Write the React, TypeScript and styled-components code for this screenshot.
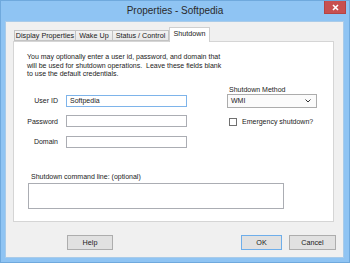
import React from 'react'
import styled, { createGlobalStyle } from 'styled-components'

const GlobalStyle = createGlobalStyle`
  html, body {
    margin: 0;
    padding: 0;
    width: 350px;
    height: 263px;
    overflow: hidden;
    background: #8fc4f3;
  }
  * {
    box-sizing: border-box;
  }
`

const ui = {
  frame: '#8fc4f3',
  frameEdge: '#6fa9dd',
  client: '#f0f0f0',
  text: '#1a1a1a',
  border: '#abadb3',
  focus: '#7eb4ea',
  panelBorder: '#d5d5d5',
}

const Window = styled.div`
  width: 350px;
  height: 263px;
  display: flex;
  flex-direction: column;
  background: ${ui.frame};
  border: 1px solid ${ui.frameEdge};
  font-family: 'Liberation Sans', Arial, sans-serif;
  color: ${ui.text};
`

const TitleBar = styled.div`
  height: 20px;
  display: grid;
  grid-template-columns: 1fr auto 1fr;
  align-items: start;
`

const Title = styled.div`
  grid-column: 2;
  font-size: 10px;
  line-height: 20px;
  color: #2a2a2a;
`

const CloseButton = styled.div`
  grid-column: 3;
  justify-self: end;
  width: 22px;
  height: 13px;
  margin-right: 3px;
  background: #c75050;
  border: 1px solid #b44343;
  border-top: none;
  display: flex;
  align-items: center;
  justify-content: center;
`

const Client = styled.div`
  flex: 1;
  margin: 0 5px 4px 4px;
  background: ${ui.client};
  border: 1px solid #a9cbe9;
  padding: 5px 9px 0 7px;
  display: flex;
  flex-direction: column;
`

const TabStrip = styled.div`
  height: 14px;
  display: flex;
  align-items: flex-end;
  padding-left: 1px;
  position: relative;
  z-index: 1;
`

const Tab = styled.div<{ $w: number; $active?: boolean }>`
  width: ${p => p.$w}px;
  height: ${p => (p.$active ? 15 : 11)}px;
  margin-bottom: ${p => (p.$active ? -1 : 0)}px;
  margin-left: ${p => (p.$active ? 0 : -1)}px;
  background: ${p =>
    p.$active ? '#fff' : 'linear-gradient(#f3f3f3, #e7e7e7)'};
  border: 1px solid ${p => (p.$active ? '#cfcfcf' : '#c3c3c3')};
  border-bottom: ${p => (p.$active ? 'none' : '1px solid #c3c3c3')};
  font-size: 7.2px;
  line-height: ${p => (p.$active ? 12 : 9)}px;
  text-align: center;
  white-space: nowrap;
  &:first-child {
    margin-left: 0;
  }
`

const Panel = styled.div`
  height: 181px;
  background: #fff;
  border: 1px solid ${ui.panelBorder};
  padding: 11px 13px 0 13px;
  display: flex;
  flex-direction: column;
`

const Intro = styled.p`
  margin: 0;
  font-size: 7px;
  line-height: 8.6px;
  width: 196px;
`

const FormArea = styled.div`
  display: flex;
  margin-top: 6px;
`

const FieldGrid = styled.div`
  display: grid;
  grid-template-columns: 31px 121px;
  column-gap: 8px;
  row-gap: 8.5px;
  padding-top: 10px;
  align-items: center;
`

const Label = styled.label`
  font-size: 7px;
  text-align: right;
  white-space: nowrap;
`

const TextBox = styled.div<{ $focused?: boolean }>`
  height: 12px;
  border: 1px solid ${p => (p.$focused ? ui.focus : ui.border)};
  background: #fff;
  font-size: 7px;
  line-height: 10px;
  padding-left: 3px;
`

const RightColumn = styled.div`
  margin-left: 40px;
  display: flex;
  flex-direction: column;
`

const SmallCaption = styled.div`
  font-size: 7px;
  line-height: 9px;
  padding-left: 2px;
`

const Select = styled.div`
  width: 90px;
  height: 14px;
  border: 1px solid #acacac;
  background: #fbfbfb;
  display: flex;
  align-items: center;
  justify-content: space-between;
  padding: 0 5px 0 3px;
  font-size: 7px;
`

const CheckRow = styled.div`
  display: flex;
  align-items: center;
  gap: 5px;
  margin-top: 10px;
  padding-left: 2px;
  font-size: 7px;
`

const CheckBox = styled.div`
  width: 8px;
  height: 8px;
  border: 1px solid #707070;
  background: #fff;
`

const CommandArea = styled.div`
  margin-top: 24px;
  margin-left: 1px;
  display: flex;
  flex-direction: column;
  gap: 2px;
`

const CommandCaption = styled.div`
  font-size: 7px;
  line-height: 9px;
  padding-left: 3px;
`

const CommandBox = styled.div`
  width: 256px;
  height: 26px;
  border: 1px solid ${ui.border};
  background: #fff;
`

const ButtonRow = styled.div`
  display: flex;
  align-items: center;
  margin-top: 13px;
  margin-right: -2px;
  padding-left: 54px;
`

const Spacer = styled.div`
  flex: 1;
`

const Button = styled.div<{ $w: number; $default?: boolean }>`
  width: ${p => p.$w}px;
  height: 15px;
  border: 1px solid ${p => (p.$default ? '#6eaeea' : '#adadad')};
  background: #e1e1e1;
  font-size: 7.2px;
  line-height: 13px;
  text-align: center;
  & + & {
    margin-left: 7px;
  }
`

export default function App() {
  return (
    <>
      <GlobalStyle />
      <Window>
        <TitleBar>
          <Title>Properties - Softpedia</Title>
          <CloseButton>
            <svg width="7" height="7" viewBox="0 0 7 7">
              <path d="M1 1 L6 6 M6 1 L1 6" stroke="#fff" strokeWidth="1.6" />
            </svg>
          </CloseButton>
        </TitleBar>
        <Client>
          <TabStrip>
            <Tab $w={62}>Display Properties</Tab>
            <Tab $w={38}>Wake Up</Tab>
            <Tab $w={57}>Status / Control</Tab>
            <Tab $w={41} $active>
              Shutdown
            </Tab>
          </TabStrip>
          <Panel>
            <Intro>
              You may optionally enter a user id, password, and domain that
              will be used for shutdown operations. &nbsp;Leave these fields
              blank to use the default credentials.
            </Intro>
            <FormArea>
              <FieldGrid>
                <Label>User ID</Label>
                <TextBox $focused>Softpedia</TextBox>
                <Label>Password</Label>
                <TextBox />
                <Label>Domain</Label>
                <TextBox />
              </FieldGrid>
              <RightColumn>
                <SmallCaption>Shutdown Method</SmallCaption>
                <Select>
                  <span>WMI</span>
                  <svg width="6" height="4" viewBox="0 0 6 4">
                    <path d="M0.5 0.5 L3 3 L5.5 0.5" fill="none" stroke="#333" strokeWidth="1" />
                  </svg>
                </Select>
                <CheckRow>
                  <CheckBox />
                  <span>Emergency shutdown?</span>
                </CheckRow>
              </RightColumn>
            </FormArea>
            <CommandArea>
              <CommandCaption>Shutdown command line: (optional)</CommandCaption>
              <CommandBox />
            </CommandArea>
          </Panel>
          <ButtonRow>
            <Button $w={46}>Help</Button>
            <Spacer />
            <Button $w={41} $default>
              OK
            </Button>
            <Button $w={47}>Cancel</Button>
          </ButtonRow>
        </Client>
      </Window>
    </>
  )
}
